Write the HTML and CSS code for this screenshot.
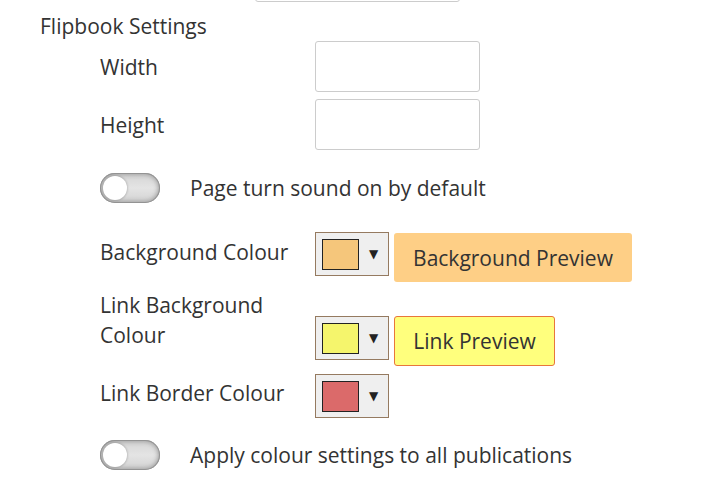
FILE: index.html
```html
<!DOCTYPE html>
<html>
<head>
<meta charset="utf-8">
<link rel="stylesheet" href="styles.css">
</head>
<body>
<div class="page">
  <div class="top-input"></div>
  <h3 class="heading">Flipbook Settings</h3>
  <div class="fields">
    <div class="row row-input">
      <label class="label">Width</label>
      <input class="text-input" type="text">
    </div>
    <div class="row row-input row-height">
      <label class="label">Height</label>
      <input class="text-input" type="text">
    </div>
    <div class="row row-toggle row-sound">
      <span class="toggle"><span class="knob"></span></span>
      <span class="toggle-text">Page turn sound on by default</span>
    </div>
    <div class="row row-colour row-bg">
      <label class="label label-bg">Background Colour</label>
      <div class="picker"><span class="swatch swatch-bg"></span><span class="arrow">▼</span></div>
      <div class="preview preview-bg">Background Preview</div>
    </div>
    <div class="row row-colour row-linkbg">
      <label class="label label-linkbg">Link Background Colour</label>
      <div class="picker picker-linkbg"><span class="swatch swatch-link"></span><span class="arrow">▼</span></div>
      <div class="preview preview-link">Link Preview</div>
    </div>
    <div class="row row-colour row-border">
      <label class="label label-border">Link Border Colour</label>
      <div class="picker"><span class="swatch swatch-border"></span><span class="arrow">▼</span></div>
    </div>
    <div class="row row-toggle row-apply">
      <span class="toggle"><span class="knob"></span></span>
      <span class="toggle-text">Apply colour settings to all publications</span>
    </div>
  </div>
</div>
</body>
</html>
```
FILE: styles.css
```css
html, body {
  margin: 0;
  padding: 0;
  background: #ffffff;
}
body {
  font-family: "Open Sans", "Liberation Sans", sans-serif;
  font-size: 21px;
  color: #333333;
  overflow: hidden;
  height: 485px;
}
.page {
  padding-left: 40px;
  padding-top: 1px;
  margin-top: -1px;
}
.top-input {
  margin-left: 215px;
  margin-top: -39px;
  width: 203px;
  height: 39px;
  border: 1px solid #cccccc;
  border-radius: 3px;
}
.heading {
  margin: 0;
  font-weight: 400;
  font-size: 21px;
  line-height: 30px;
  margin-top: 9px;
}
.fields {
  padding-left: 60px;
}
.row {
  display: flex;
}
.label {
  width: 215px;
  flex: none;
  line-height: 30px;
}
.row-input {
  align-items: center;
}
.row-height {
  margin-top: 7px;
}
.text-input {
  width: 165px;
  height: 51px;
  box-sizing: border-box;
  border: 1px solid #cccccc;
  border-radius: 3px;
  margin: 0;
  padding: 0 8px;
  font: inherit;
  background: #fff;
}
.row-toggle {
  align-items: center;
  height: 30px;
}
.row-sound {
  margin-top: 23px;
}
.row-apply {
  margin-top: 22px;
}
.toggle {
  position: relative;
  width: 60px;
  height: 30px;
  box-sizing: border-box;
  border-radius: 15px;
  background: linear-gradient(#d4d4d4, #e4e4e4 50%, #d2d2d2);
  box-shadow: inset 0 0 0 1px #939393, inset 0 0 4px 2px #a4a4a4;
  flex: none;
}
.knob {
  position: absolute;
  left: 3px;
  top: 3px;
  width: 24px;
  height: 24px;
  border-radius: 50%;
  background: #ffffff;
  box-shadow: 0 0 2px 1px rgba(0,0,0,0.15);
}
.toggle-text {
  margin-left: 30px;
  line-height: 30px;
}
.row-colour {
  align-items: flex-start;
}
.row-bg {
  margin-top: 29px;
}
.label-bg {
  padding-top: 5px;
}
.row-linkbg {
  margin-top: 8px;
}
.label-linkbg {
  width: 200px;
  margin-right: 15px;
}
.picker-linkbg {
  margin-top: 26px;
}
.row-border {
  margin-top: 8px;
}
.label-border {
  padding-top: 4px;
}
.picker {
  width: 74px;
  height: 44px;
  box-sizing: border-box;
  border: 1px solid #957a60;
  background: #efefef;
  display: flex;
  align-items: center;
  padding-left: 6px;
  flex: none;
}
.swatch {
  width: 37px;
  height: 31px;
  box-sizing: border-box;
  border: 1px solid #222222;
  flex: none;
}
.swatch-bg { background: #f5c67b; }
.swatch-link { background: #f5f56c; }
.swatch-border { background: #db6a6a; }
.arrow {
  font-family: "DejaVu Sans", sans-serif;
  font-size: 12px;
  color: #222222;
  margin-left: 10px;
  line-height: 1;
}
.preview {
  margin-left: 5px;
  height: 49px;
  box-sizing: border-box;
  border-radius: 3px;
  display: flex;
  align-items: center;
  justify-content: center;
  white-space: nowrap;
  line-height: 30px;
}
.preview-bg {
  margin-top: 1px;
  width: 238px;
  background: #fecf86;
}
.preview-link {
  margin-top: 26px;
  width: 161px;
  height: 50px;
  background: #ffff7d;
  border: 1px solid #e8763c;
}
```
